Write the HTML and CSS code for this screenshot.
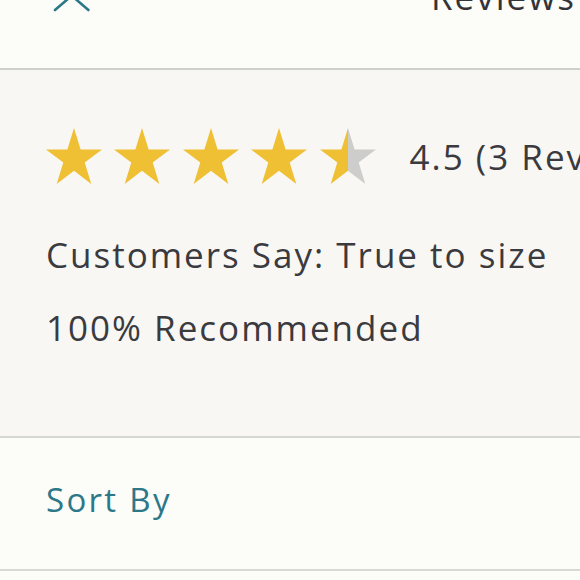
FILE: index.html
```html
<!DOCTYPE html>
<html lang="en">
<head>
<meta charset="utf-8">
<title>Reviews</title>
<link rel="stylesheet" href="styles.css">
</head>
<body>
<header class="header">
  <svg class="close-icon" width="44" height="44" viewBox="0 0 44 44" aria-hidden="true">
    <path d="M5 11.4 L38.4 40 M38.4 11.4 L5 40" fill="none" stroke="#2b7889" stroke-width="2.6" stroke-linecap="round"/>
  </svg>
  <h1 class="title">Reviews</h1>
</header>
<section class="summary">
  <div class="rating-row">
    <div class="stars">
      <svg class="star" viewBox="2.45 0 95.1 90.45" preserveAspectRatio="none"><path class="star-full" d="M50 0 L61.23 34.55 L97.55 34.55 L68.16 55.9 L79.39 90.45 L50 69.1 L20.61 90.45 L31.84 55.9 L2.45 34.55 L38.77 34.55 Z"/></svg>
      <svg class="star" viewBox="2.45 0 95.1 90.45" preserveAspectRatio="none"><path class="star-full" d="M50 0 L61.23 34.55 L97.55 34.55 L68.16 55.9 L79.39 90.45 L50 69.1 L20.61 90.45 L31.84 55.9 L2.45 34.55 L38.77 34.55 Z"/></svg>
      <svg class="star" viewBox="2.45 0 95.1 90.45" preserveAspectRatio="none"><path class="star-full" d="M50 0 L61.23 34.55 L97.55 34.55 L68.16 55.9 L79.39 90.45 L50 69.1 L20.61 90.45 L31.84 55.9 L2.45 34.55 L38.77 34.55 Z"/></svg>
      <svg class="star" viewBox="2.45 0 95.1 90.45" preserveAspectRatio="none"><path class="star-full" d="M50 0 L61.23 34.55 L97.55 34.55 L68.16 55.9 L79.39 90.45 L50 69.1 L20.61 90.45 L31.84 55.9 L2.45 34.55 L38.77 34.55 Z"/></svg>
      <svg class="star" viewBox="2.45 0 95.1 90.45" preserveAspectRatio="none">
        <defs>
          <linearGradient id="half" x1="0" y1="0" x2="1" y2="0">
            <stop offset="50%" stop-color="#efbf34"/>
            <stop offset="50%" stop-color="#cdcdcc"/>
          </linearGradient>
        </defs>
        <path fill="url(#half)" d="M50 0 L61.23 34.55 L97.55 34.55 L68.16 55.9 L79.39 90.45 L50 69.1 L20.61 90.45 L31.84 55.9 L2.45 34.55 L38.77 34.55 Z"/>
      </svg>
    </div>
    <span class="rating-text">4.5 (3 Reviews)</span>
  </div>
  <p class="summary-line fit">Customers Say: True to size</p>
  <p class="summary-line">100% Recommended</p>
</section>
<section class="sort">
  <span class="sort-label">Sort By</span>
</section>
</body>
</html>
```

FILE: styles.css
```css
html, body {
  margin: 0;
  padding: 0;
  overflow: hidden;
}

body {
  background: #fcfcf8;
  font-family: "Open Sans", Lato, sans-serif;
  color: #3a3a3f;
}

.header {
  display: flex;
  align-items: flex-start;
  height: 68px;
  border-bottom: 2px solid #cfcfcc;
  white-space: nowrap;
}

.close-icon {
  flex: none;
  margin-top: -30px;
  margin-left: 50px;
}

.title {
  margin: -23px 0 0 337px;
  font-size: 35px;
  line-height: 40px;
  font-weight: 400;
  letter-spacing: 2px;
  color: #333338;
}

.summary {
  background: #f8f7f3;
  padding: 58px 0 88px 46px;
  border-bottom: 2px solid #d6d6d3;
}

.rating-row {
  display: flex;
  align-items: center;
  white-space: nowrap;
}

.stars {
  display: flex;
  gap: 12.4px;
  flex: none;
}

.star {
  width: 56px;
  height: 56px;
  display: block;
}

.star-full {
  fill: #efbf34;
}

.rating-text {
  margin-left: 34px;
  margin-top: 2px;
  font-size: 35px;
  line-height: 40px;
  letter-spacing: 2px;
}

.summary-line {
  margin: 0;
  font-size: 35px;
  line-height: 40px;
  letter-spacing: 2px;
  white-space: nowrap;
}

.summary-line.fit {
  margin-top: 51px;
  margin-bottom: 33px;
}

.sort {
  padding: 42px 0 49px 46px;
  border-bottom: 2px solid #d8d8d5;
}

.sort-label {
  display: block;
  font-size: 33px;
  line-height: 40px;
  letter-spacing: 2.3px;
  color: #2b7889;
}
```
